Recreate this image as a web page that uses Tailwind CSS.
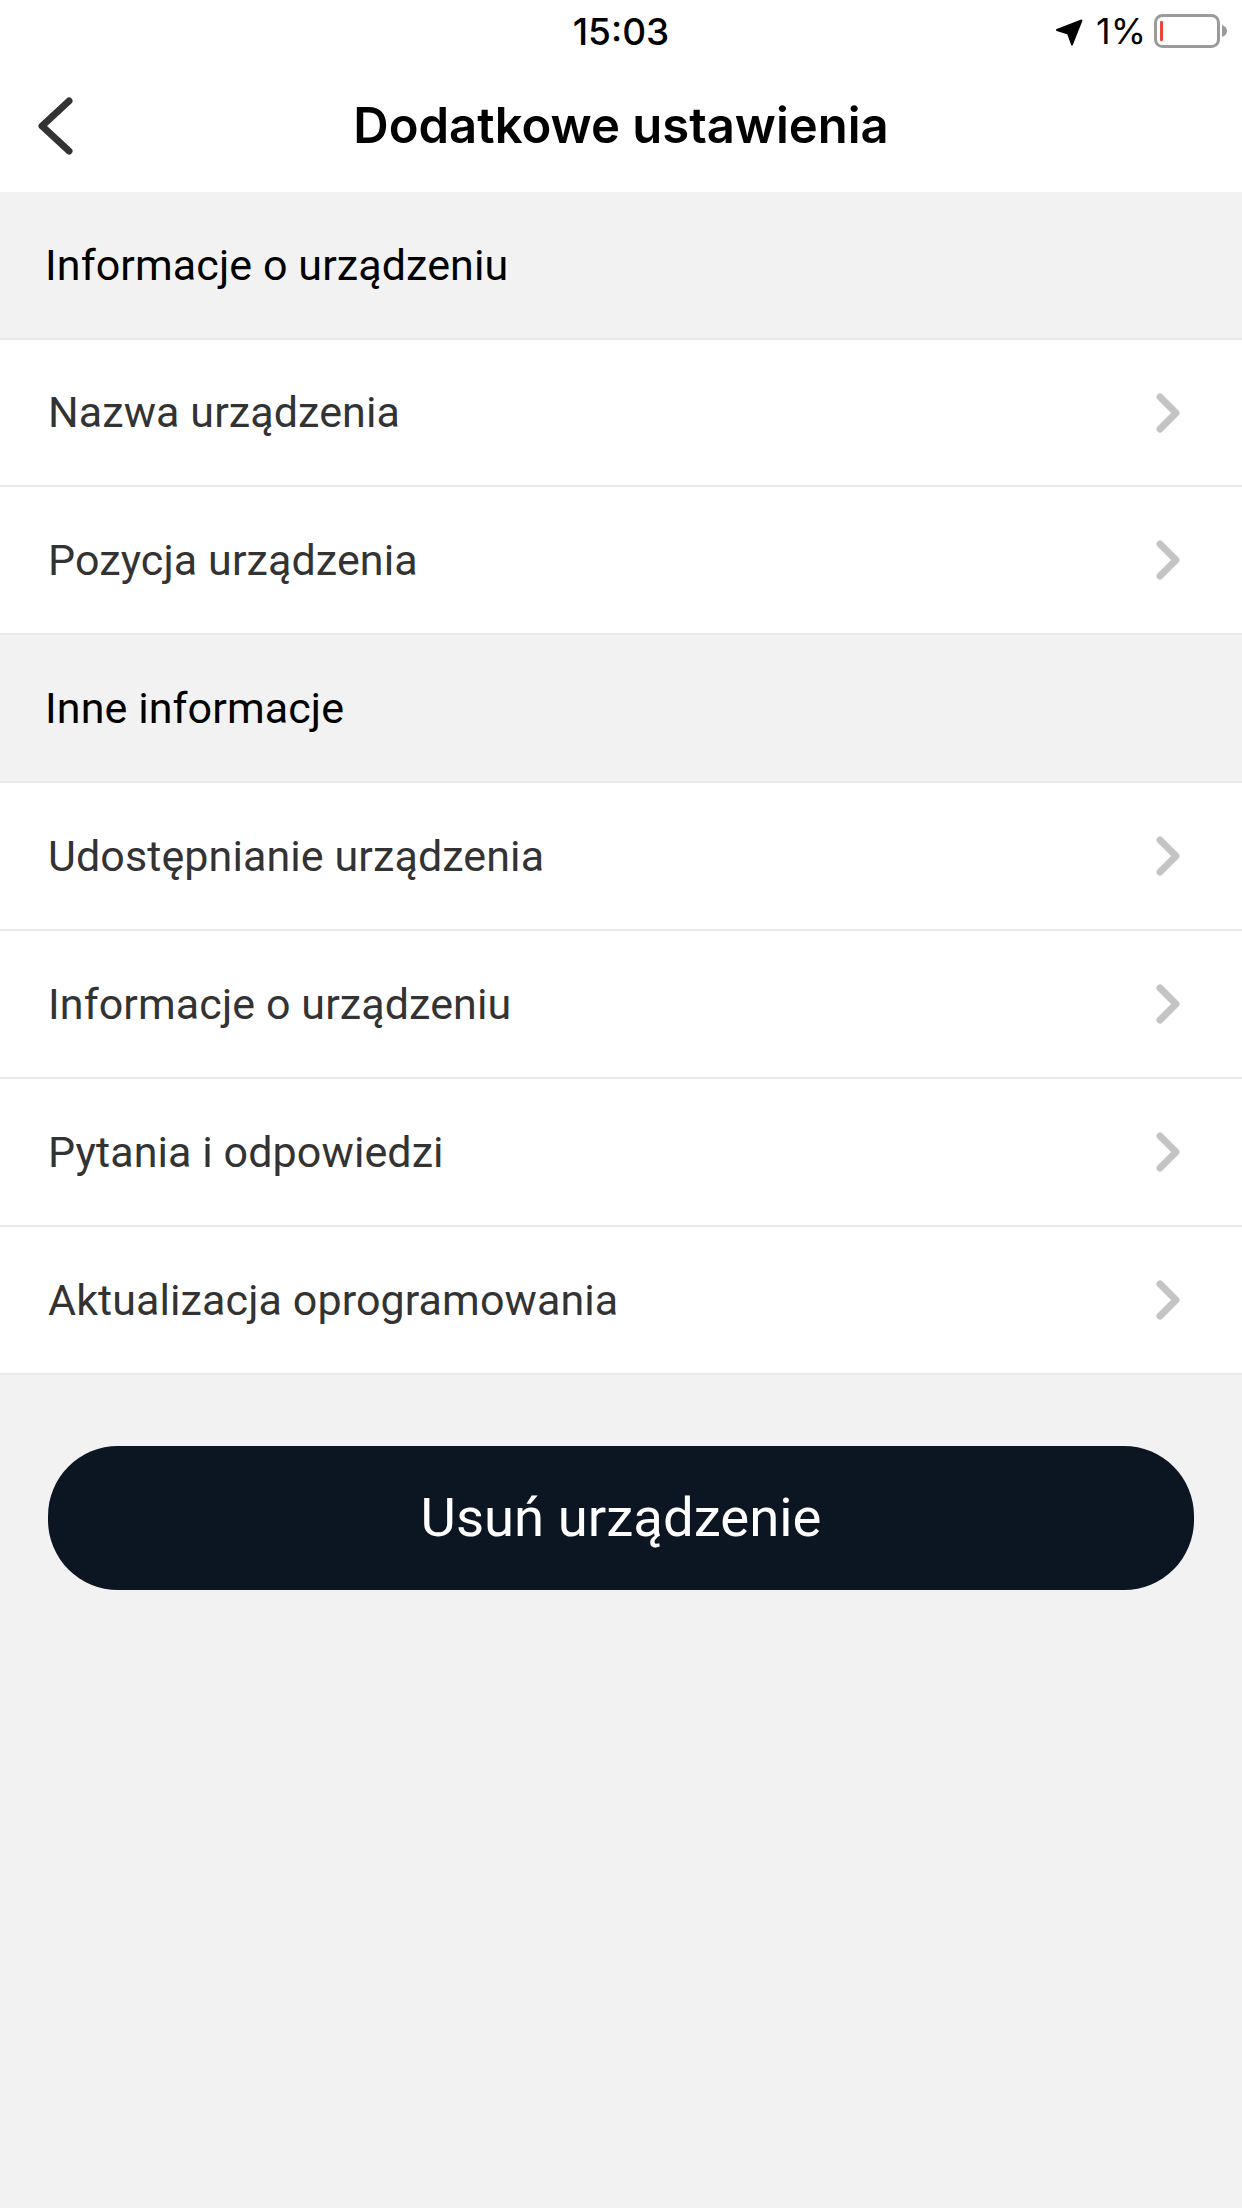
<!DOCTYPE html>
<html lang="en">
<head>
    <meta charset="UTF-8">
    <meta name="viewport" content="width=device-width, initial-scale=1.0">
    <title>Dodatkowe ustawienia</title>
    <script src="https://cdn.jsdelivr.net/npm/@tailwindcss/browser@4"></script>
</head>
<body class="bg-[#f2f2f2] font-['Roboto',sans-serif] w-[1242px] h-[2208px] overflow-hidden flex flex-col">
    <!-- status bar + title -->
    <header class="bg-white h-[192px] shrink-0 flex flex-col">
        <div class="relative h-[62px] flex items-center justify-center">
            <span class="font-['Inter',sans-serif] font-medium text-[37px] leading-none text-black">15:03</span>
            <div class="absolute left-[1055px] top-[13px] flex items-center">
                <svg class="w-[30px] h-[30px]" viewBox="0 0 30 30"><path d="M2 14 26.500 4.500 17 28.500 13 17.500z" fill="#000" stroke="#000" stroke-width="2" stroke-linejoin="round"/></svg>
                <span class="ml-[11px] font-['Inter',sans-serif] text-[36px] leading-none text-black">1%</span>
                <svg class="ml-[8px] w-[74px] h-[34px]" viewBox="0 0 74 34">
                    <rect x="1.500" y="1.500" width="63" height="31" rx="7" fill="none" stroke="#9b9b9b" stroke-width="3"/>
                    <rect x="6" y="7" width="3" height="20" rx="1" fill="#e8473a"/>
                    <path d="M68 11c3 1 5 3 5 6s-2 5-5 6z" fill="#9b9b9b"/>
                </svg>
            </div>
        </div>
        <div class="relative flex-1 flex items-center justify-center pb-[4px]">
            <svg class="absolute left-[36px] top-[35px] w-[38px] h-[58px]" viewBox="0 0 38 58" fill="none"><path d="M33 4 6 29l27 25" stroke="#333" stroke-width="7" stroke-linecap="round" stroke-linejoin="round"/></svg>
            <h1 class="font-['Inter',sans-serif] font-semibold text-[49px] leading-none text-black">Dodatkowe ustawienia</h1>
        </div>
    </header>

    <div class="h-[148px] shrink-0 flex items-center pl-[45px] text-[43px] tracking-[0.1px] text-black border-b-2 border-[#e9e9e9]">Informacje o urządzeniu</div>
    <a class="bg-white h-[147px] shrink-0 flex items-center justify-between pl-[48px] pr-[62px] text-[43px] tracking-[0.1px] text-[#333] border-b-2 border-[#e9e9e9]">
        <span>Nazwa urządzenia</span>
        <svg class="w-[24px] h-[40px]" viewBox="0 0 24 40" fill="none"><path d="M4 4l16 16L4 36" stroke="#c4c4c4" stroke-width="7" stroke-linecap="round" stroke-linejoin="round"/></svg>
    </a>
    <a class="bg-white h-[148px] shrink-0 flex items-center justify-between pl-[48px] pr-[62px] text-[43px] tracking-[0.1px] text-[#333] border-b-2 border-[#e9e9e9]">
        <span>Pozycja urządzenia</span>
        <svg class="w-[24px] h-[40px]" viewBox="0 0 24 40" fill="none"><path d="M4 4l16 16L4 36" stroke="#c4c4c4" stroke-width="7" stroke-linecap="round" stroke-linejoin="round"/></svg>
    </a>

    <div class="h-[148px] shrink-0 flex items-center pl-[45px] text-[43px] tracking-[0.1px] text-black border-b-2 border-[#e9e9e9]">Inne informacje</div>
    <a class="bg-white h-[148px] shrink-0 flex items-center justify-between pl-[48px] pr-[62px] text-[43px] tracking-[0.1px] text-[#333] border-b-2 border-[#e9e9e9]">
        <span>Udostępnianie urządzenia</span>
        <svg class="w-[24px] h-[40px]" viewBox="0 0 24 40" fill="none"><path d="M4 4l16 16L4 36" stroke="#c4c4c4" stroke-width="7" stroke-linecap="round" stroke-linejoin="round"/></svg>
    </a>
    <a class="bg-white h-[148px] shrink-0 flex items-center justify-between pl-[48px] pr-[62px] text-[43px] tracking-[0.1px] text-[#333] border-b-2 border-[#e9e9e9]">
        <span>Informacje o urządzeniu</span>
        <svg class="w-[24px] h-[40px]" viewBox="0 0 24 40" fill="none"><path d="M4 4l16 16L4 36" stroke="#c4c4c4" stroke-width="7" stroke-linecap="round" stroke-linejoin="round"/></svg>
    </a>
    <a class="bg-white h-[148px] shrink-0 flex items-center justify-between pl-[48px] pr-[62px] text-[43px] tracking-[0.1px] text-[#333] border-b-2 border-[#e9e9e9]">
        <span>Pytania i odpowiedzi</span>
        <svg class="w-[24px] h-[40px]" viewBox="0 0 24 40" fill="none"><path d="M4 4l16 16L4 36" stroke="#c4c4c4" stroke-width="7" stroke-linecap="round" stroke-linejoin="round"/></svg>
    </a>
    <a class="bg-white h-[148px] shrink-0 flex items-center justify-between pl-[48px] pr-[62px] text-[43px] tracking-[0.1px] text-[#333] border-b-2 border-[#e9e9e9]">
        <span>Aktualizacja oprogramowania</span>
        <svg class="w-[24px] h-[40px]" viewBox="0 0 24 40" fill="none"><path d="M4 4l16 16L4 36" stroke="#c4c4c4" stroke-width="7" stroke-linecap="round" stroke-linejoin="round"/></svg>
    </a>

    <div class="px-[48px] pt-[71px]">
        <button class="w-full h-[144px] rounded-[70px] bg-[#0c1623] text-white text-[54.500px] flex items-center justify-center">Usuń urządzenie</button>
    </div>
</body>
</html>
